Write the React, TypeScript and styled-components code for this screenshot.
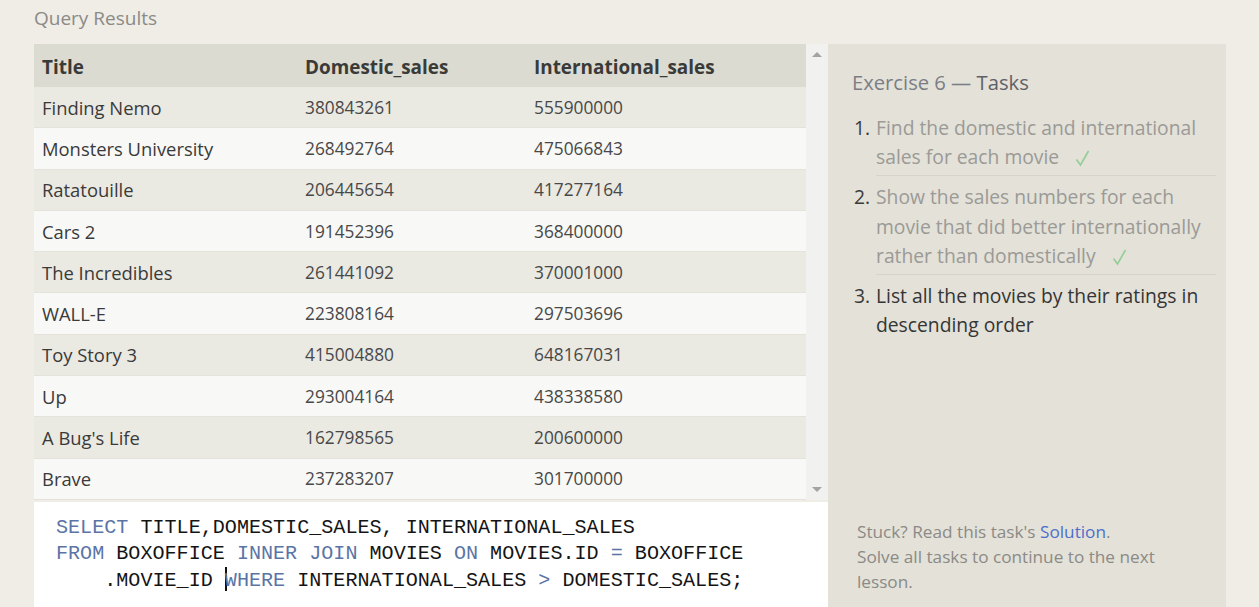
import React from 'react'
import styled, { createGlobalStyle } from 'styled-components'

const GlobalStyle = createGlobalStyle`
  html, body {
    margin: 0;
    padding: 0;
    background: #efede6;
    overflow: hidden;
  }
  body {
    font-family: 'Open Sans', 'Noto Sans', sans-serif;
  }
`

const rows = [
  ['Finding Nemo', '380843261', '555900000'],
  ['Monsters University', '268492764', '475066843'],
  ['Ratatouille', '206445654', '417277164'],
  ['Cars 2', '191452396', '368400000'],
  ['The Incredibles', '261441092', '370001000'],
  ['WALL-E', '223808164', '297503696'],
  ['Toy Story 3', '415004880', '648167031'],
  ['Up', '293004164', '438338580'],
  ["A Bug's Life", '162798565', '200600000'],
  ['Brave', '237283207', '301700000'],
]

const tasks = [
  { text: 'Find the domestic and international sales for each movie', done: true },
  {
    text: 'Show the sales numbers for each movie that did better internationally rather than domestically',
    done: true,
  },
  { text: 'List all the movies by their ratings in descending order', done: false },
]

const CheckIcon = () => (
  <Check width="15" height="18" viewBox="0 0 15 18" aria-hidden="true">
    <polyline points="1.5,10.5 5.5,16 13.5,2" fill="none" stroke="#94cd94" strokeWidth="1.6" />
  </Check>
)

const App = () => {
  return (
    <Page>
      <GlobalStyle />
      <Heading>Query Results</Heading>
      <Main>
        <LeftColumn>
          <TableWrap>
            <TableArea>
              <HeaderRow>
                <HeadCell>Title</HeadCell>
                <HeadCell>Domestic_sales</HeadCell>
                <HeadCell>International_sales</HeadCell>
              </HeaderRow>
              {rows.map((r, i) => (
                <Row key={r[0]} $odd={i % 2 === 0}>
                  <TitleCell>{r[0]}</TitleCell>
                  <NumCell>{r[1]}</NumCell>
                  <NumCell>{r[2]}</NumCell>
                </Row>
              ))}
            </TableArea>
            <Scrollbar>
              <Arrow $up />
              <Arrow />
            </Scrollbar>
          </TableWrap>
          <Editor>
            <CodeLine>
              <Kw>SELECT</Kw> TITLE,DOMESTIC_SALES, INTERNATIONAL_SALES
            </CodeLine>
            <CodeLine>
              <Kw>FROM</Kw> BOXOFFICE <Kw>INNER</Kw> <Kw>JOIN</Kw> MOVIES <Kw>ON</Kw> MOVIES.ID{' '}
              <Kw>=</Kw> BOXOFFICE
            </CodeLine>
            <CodeLine>
              {'    .MOVIE_ID '}
              <Cursor />
              <Kw>WHERE</Kw> INTERNATIONAL_SALES <Kw>&gt;</Kw> DOMESTIC_SALES;
            </CodeLine>
          </Editor>
        </LeftColumn>
        <Panel>
          <div>
            <PanelTitle>
              Exercise 6 — <strong>Tasks</strong>
            </PanelTitle>
            <TaskList>
              {tasks.map((t, i) => (
                <Task key={i} $last={i === tasks.length - 1}>
                  <TaskNum>{i + 1}.</TaskNum>
                  <TaskText $done={t.done}>
                    {t.text}
                    {t.done && <CheckIcon />}
                  </TaskText>
                </Task>
              ))}
            </TaskList>
          </div>
          <Footer>
            Stuck? Read this task's <a href="#">Solution</a>.
            <br />
            Solve all tasks to continue to the next lesson.
          </Footer>
        </Panel>
      </Main>
    </Page>
  )
}

export default App

const Page = styled.div`
  padding-left: 34px;
  height: 607px;
  display: flex;
  flex-direction: column;
`

const Heading = styled.h1`
  margin: 0;
  height: 44px;
  line-height: 36px;
  font-size: 19px;
  font-weight: 400;
  color: #8b8a86;
`

const Main = styled.div`
  display: flex;
  flex: 1;
  min-height: 0;
`

const LeftColumn = styled.div`
  width: 794px;
  display: flex;
  flex-direction: column;
`

const TableWrap = styled.div`
  display: flex;
  height: 458px;
  border-bottom: 2px solid #efede6;
  box-sizing: border-box;
`

const TableArea = styled.div`
  flex: 1;
  display: flex;
  flex-direction: column;
`

const grid = `
  display: grid;
  grid-template-columns: 263px 229px 1fr;
  align-items: center;
  padding-left: 8px;
  box-sizing: border-box;
`

const HeaderRow = styled.div`
  ${grid}
  height: 43px;
  background: #dcdbd1;
`

const HeadCell = styled.div`
  font-size: 18.9px;
  font-weight: 700;
  color: #3a3a38;
  padding-top: 2px;
`

const Row = styled.div<{ $odd: boolean }>`
  ${grid}
  height: 41.3px;
  background: ${(p) => (p.$odd ? '#eae9e2' : '#f8f8f6')};
  border-bottom: 1px solid #e4e2db;
`

const TitleCell = styled.div`
  font-size: 18.4px;
  color: #3a3a3a;
`

const NumCell = styled.div`
  font-size: 17.3px;
  color: #484848;
`

const Scrollbar = styled.div`
  width: 22px;
  background: #f1f1f0;
  display: flex;
  flex-direction: column;
  justify-content: space-between;
  align-items: center;
  padding: 8px 0 8px 0;
  box-sizing: border-box;
`

const Arrow = styled.div<{ $up?: boolean }>`
  width: 0;
  height: 0;
  border-left: 5px solid transparent;
  border-right: 5px solid transparent;
  ${(p) =>
    p.$up ? 'border-bottom: 5px solid #a3a3a3;' : 'border-top: 5px solid #a3a3a3;'}
`

const Editor = styled.div`
  flex: 1;
  background: #ffffff;
  padding: 13px 22px 0;
  font-family: 'Liberation Mono', 'DejaVu Sans Mono', monospace;
  font-size: 20.1px;
  line-height: 26px;
  color: #141414;
`

const CodeLine = styled.div`
  white-space: pre;
`

const Kw = styled.span`
  color: #5b74a6;
`

const Cursor = styled.span`
  display: inline-block;
  width: 2px;
  height: 24px;
  background: #111;
  vertical-align: -5px;
  margin-right: -2px;
`

const Panel = styled.div`
  width: 398px;
  background: #e3e1d8;
  display: flex;
  flex-direction: column;
  justify-content: space-between;
  padding: 24px 10px 13px 24px;
  box-sizing: border-box;
`

const PanelTitle = styled.h2`
  margin: 0 0 16px;
  font-size: 20.2px;
  font-weight: 400;
  line-height: 29px;
  color: #7b7e86;

  strong {
    font-weight: 400;
    color: #5f6067;
  }
`

const TaskList = styled.ol`
  list-style: none;
  margin: 0;
  padding: 0;
`

const Task = styled.li<{ $last: boolean }>`
  display: flex;
  padding-bottom: ${(p) => (p.$last ? '0' : '5px')};
  margin-bottom: 6px;
  position: relative;

  &::after {
    content: '';
    display: ${(p) => (p.$last ? 'none' : 'block')};
    position: absolute;
    left: 24px;
    right: 0;
    bottom: 0;
    border-bottom: 1px solid #d6d4ca;
  }
`

const TaskNum = styled.span`
  width: 24px;
  flex-shrink: 0;
  text-align: right;
  padding-right: 6px;
  box-sizing: border-box;
  font-size: 19.3px;
  line-height: 29.2px;
  color: #3a3a3a;
`

const TaskText = styled.span<{ $done: boolean }>`
  font-size: 19.3px;
  line-height: 29.2px;
  color: ${(p) => (p.$done ? '#9b9a96' : '#353535')};
`

const Check = styled.svg`
  margin-left: 16px;
  vertical-align: -3px;
`

const Footer = styled.div`
  font-size: 17.2px;
  line-height: 25px;
  color: #8b8a86;
  padding-left: 5px;
  max-width: 320px;

  a {
    color: #4d6fcc;
    text-decoration: none;
  }
`
